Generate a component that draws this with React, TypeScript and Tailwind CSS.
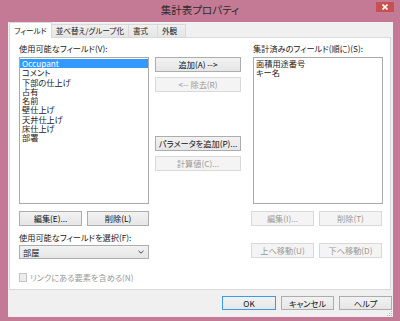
import { ReactNode } from 'react';

const available = ['Occupant', 'コメント', '下部の仕上げ', '占有', '名前', '壁仕上げ', '天井仕上げ', '床仕上げ', '部署'];
const scheduled = ['面積用途番号', 'キー名'];

interface BtnProps {
  children: ReactNode;
  className?: string;
  disabled?: boolean;
  primary?: boolean;
}

function Btn({ children, className = '', disabled, primary }: BtnProps) {
  const look = disabled
    ? 'border-[#d9d9d9] bg-[#f4f4f4] text-[#9a9a9a]'
    : primary
      ? 'border-[#3c9be8] bg-gradient-to-b from-[#f2f2f2] to-[#e6e6e6] text-[#111]'
      : 'border-[#adadad] bg-gradient-to-b from-[#f2f2f2] to-[#e6e6e6] text-[#111]';
  return (
    <div className={`flex items-center justify-center border leading-none whitespace-nowrap ${look} ${className}`}>
      {children}
    </div>
  );
}

const tabIdle = 'h-[14px] px-[4px] bg-gradient-to-b from-[#f0f0f0] to-[#e5e5e5] border border-l-0 border-[#d9d9d9] flex items-center';

export default function App() {
  return (
    <div className="w-[400px] h-[321px] bg-[#c47a95] flex flex-col font-['Noto_Sans_CJK_JP',sans-serif] [font-feature-settings:'palt'] text-[8.2px] text-[#1a1a1a] whitespace-nowrap">
      {/* Title bar */}
      <div className="h-[22px] grid grid-cols-[1fr_auto_1fr] items-start">
        <div />
        <div className="mt-[3px] text-[10.5px] leading-[14px] text-[#2a2a2a]">集計表プロパティ</div>
        <div className="flex justify-end pr-[6px] pt-[2px]">
          <div className="w-[18px] h-[10px] bg-[#c75050] flex items-center justify-center">
            <svg width="6" height="6" viewBox="0 0 6 6">
              <path d="M0.5 0.5L5.5 5.5M5.5 0.5L0.5 5.5" stroke="#fff" strokeWidth="1.6" />
            </svg>
          </div>
        </div>
      </div>

      {/* Client area */}
      <div className="ml-[8px] mr-[7px] h-[295px] bg-[#f0f0f0] flex flex-col pt-[1px]">
        {/* Tabs */}
        <div className="flex items-end ml-[1px] h-[15px] -mb-px text-[7.6px]">
          <div className="relative z-10 h-[16px] min-w-[36px] px-[4px] bg-white border border-b-0 border-[#d9d9d9] flex items-center">
            フィールド
          </div>
          <div className={tabIdle}>並べ替え/グループ化</div>
          <div className={`${tabIdle} min-w-[29px]`}>書式</div>
          <div className={`${tabIdle} min-w-[28px]`}>外観</div>
        </div>

        {/* Panel */}
        <div className="ml-[1px] w-[382px] h-[253px] bg-white border border-[#d9d9d9] flex pl-[9px] pt-[5px]">
          {/* Left column */}
          <div className="w-[130px] flex flex-col">
            <div className="h-[11px] leading-[11px]">使用可能なフィールド(V):</div>
            <div className="mt-[3px] h-[147px] border border-[#aaaaaa] bg-white flex flex-col pt-px">
              {available.map((f, i) => (
                <div
                  key={f}
                  className={`h-[9.3px] leading-[9.3px] pl-[2px] ${i === 0 ? 'bg-[#3399ff] text-white' : ''}`}
                >
                  {f}
                </div>
              ))}
            </div>
            <div className="mt-[7px] flex gap-[5px]">
              <Btn className="w-[63px] h-[15px]">編集(E)...</Btn>
              <Btn className="w-[62px] h-[15px]">削除(L)</Btn>
            </div>
            <div className="mt-[6px] h-[11px] leading-[11px]">使用可能なフィールドを選択(F):</div>
            <div className="mt-[2px] h-[14px] border border-[#adadad] bg-gradient-to-b from-[#f2f2f2] to-[#e6e6e6] flex items-center justify-between pl-[3px] pr-[4px]">
              <span>部屋</span>
              <svg width="6" height="4" viewBox="0 0 6 4">
                <path d="M0.5 0.8L3 3.2L5.5 0.8" stroke="#444" strokeWidth="1" fill="none" />
              </svg>
            </div>
            <div className="mt-[12px] flex items-center gap-[3px] text-[#9a9a9a]">
              <div className="w-[8px] h-[9px] border border-[#c4c4c4] bg-[#ececec]" />
              <span>リンクにある要素を含める(N)</span>
            </div>
          </div>

          {/* Middle column */}
          <div className="ml-[6px] w-[86px] flex flex-col pt-[14px]">
            <Btn className="h-[15px]">追加(A) --&gt;</Btn>
            <Btn disabled className="mt-[5px] h-[15px]">&lt;-- 除去(R)</Btn>
            <Btn className="mt-[44px] h-[15px]">パラメータを追加(P)...</Btn>
            <Btn disabled className="mt-[5px] h-[15px]">計算値(C)...</Btn>
          </div>

          {/* Right column */}
          <div className="ml-[10px] w-[132px] flex flex-col">
            <div className="ml-[2px] h-[11px] leading-[11px]">集計済みのフィールド(順に)(S):</div>
            <div className="ml-[2px] mt-[3px] w-[130px] h-[147px] border border-[#aaaaaa] bg-white flex flex-col pt-px">
              {scheduled.map((f) => (
                <div key={f} className="h-[9.3px] leading-[9.3px] pl-[2px]">
                  {f}
                </div>
              ))}
            </div>
            <div className="mt-[7px] flex gap-[5px]">
              <Btn disabled className="w-[63px] h-[15px]">編集(I)...</Btn>
              <Btn disabled className="w-[63px] h-[15px]">削除(T)</Btn>
            </div>
            <div className="mt-[17px] flex gap-[5px]">
              <Btn disabled className="w-[63px] h-[15px]">上へ移動(U)</Btn>
              <Btn disabled className="w-[63px] h-[15px]">下へ移動(D)</Btn>
            </div>
          </div>
        </div>

        {/* Dialog buttons */}
        <div className="mt-[6px] flex justify-end gap-[5px] pr-[1px]">
          <Btn primary className="w-[54px] h-[14px]">OK</Btn>
          <Btn className="w-[53px] h-[14px]">キャンセル</Btn>
          <Btn className="w-[53px] h-[14px]">ヘルプ</Btn>
        </div>
        <div className="flex justify-end pr-px mt-px">
          <svg width="5" height="5" viewBox="0 0 5 5">
            <rect x="4" y="0" width="1" height="1" fill="#b5b5b5" />
            <rect x="2" y="2" width="1" height="1" fill="#b5b5b5" />
            <rect x="4" y="2" width="1" height="1" fill="#b5b5b5" />
            <rect x="0" y="4" width="1" height="1" fill="#b5b5b5" />
            <rect x="2" y="4" width="1" height="1" fill="#b5b5b5" />
            <rect x="4" y="4" width="1" height="1" fill="#b5b5b5" />
          </svg>
        </div>
      </div>
    </div>
  );
}
